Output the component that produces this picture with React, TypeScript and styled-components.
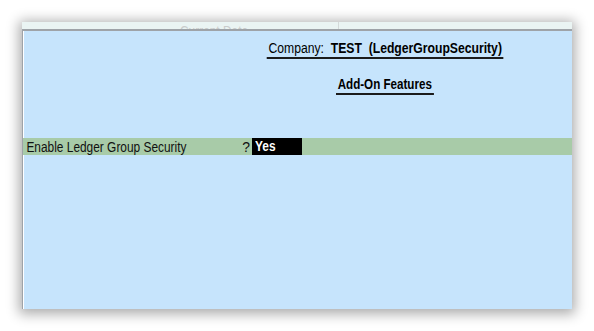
import React from "react";
import styled, { createGlobalStyle } from "styled-components";

const GlobalStyle = createGlobalStyle`
  html, body {
    margin: 0;
    padding: 0;
    background: #ffffff;
  }
  body {
    font-family: "Liberation Sans Narrow", "Liberation Sans", Arial, sans-serif;
  }
`;

// the screen uses a condensed Arial; squeeze Liberation Sans to match it
const NARROW = 0.85;

const Page = styled.div`
  width: 594px;
  height: 331px;
  padding: 22px 0 0 22px;
  box-sizing: border-box;
`;

const Window = styled.div`
  width: 550px;
  height: 287px;
  display: flex;
  flex-direction: column;
  background: #c6e4fc;
  box-shadow: 0 2px 12px 3px rgba(0, 0, 0, 0.33);
`;

const TopStrip = styled.div`
  height: 7px;
  display: flex;
  overflow: hidden;
  background: #eaf4f3;
  border-bottom: 2px solid #9ea3a8;
`;

const StripCell = styled.div<{ $width: number }>`
  width: ${({ $width }) => $width}px;
  box-sizing: border-box;
  padding-left: 158px;
  border-right: 1px solid #d4dada;
`;

const FadedLabel = styled.span`
  display: inline-block;
  margin-top: -7px;
  font-size: 14px;
  line-height: 16px;
  color: #c9cccc;
  white-space: nowrap;
  transform: scaleX(${NARROW});
  transform-origin: left center;
`;

const Body = styled.div`
  flex: 1;
  display: flex;
  flex-direction: column;
  border-left: 1px solid #9ea3a8;
  box-shadow: inset 1px 0 0 #ffffff;
  padding-top: 9px;
`;

const Header = styled.div`
  margin-left: 243px;
  width: 238px;
  display: flex;
  flex-direction: column;
  align-items: center;
`;

const Underlined = styled.div<{ $gap?: number; $scale: number }>`
  font-size: 14px;
  line-height: 16px;
  color: #000;
  padding: 0 2px 1px;
  border-bottom: 2px solid #1b1b1b;
  margin-top: ${({ $gap }) => $gap ?? 0}px;
  white-space: pre;
  transform: scaleX(${({ $scale }) => $scale});
`;

const Strong = styled.b`
  font-weight: bold;
`;

const Row = styled.div`
  margin-top: 43px;
  height: 17px;
  display: flex;
  align-items: center;
  background: #a8cba8;
  font-size: 14px;
`;

const RowLabel = styled.div`
  width: 214px;
  padding-left: 4px;
  color: #111;
  white-space: nowrap;
  transform: scaleX(${NARROW});
  transform-origin: left center;
`;

const Question = styled.div`
  width: 9px;
  text-align: right;
  color: #111;
`;

const ValueBox = styled.div`
  margin-left: 2px;
  width: 50px;
  height: 17px;
  padding-left: 3px;
  box-sizing: border-box;
  background: #000;
  color: #fff;
  font-weight: bold;
  line-height: 17px;
`;

const ValueText = styled.span`
  display: inline-block;
  transform: scaleX(${NARROW});
  transform-origin: left center;
`;

export default function App() {
  return (
    <>
      <GlobalStyle />
      <Page>
        <Window>
          <TopStrip>
            <StripCell $width={317}>
              <FadedLabel>Current Date</FadedLabel>
            </StripCell>
          </TopStrip>
          <Body>
            <Header>
              <Underlined $scale={0.87}>
                {"Company:  "}
                <Strong>{"TEST  (LedgerGroupSecurity)"}</Strong>
              </Underlined>
              <Underlined $gap={17} $scale={0.83}>
                <Strong>Add-On Features</Strong>
              </Underlined>
            </Header>
            <Row>
              <RowLabel>Enable Ledger Group Security</RowLabel>
              <Question>?</Question>
              <ValueBox>
                <ValueText>Yes</ValueText>
              </ValueBox>
            </Row>
          </Body>
        </Window>
      </Page>
    </>
  );
}
